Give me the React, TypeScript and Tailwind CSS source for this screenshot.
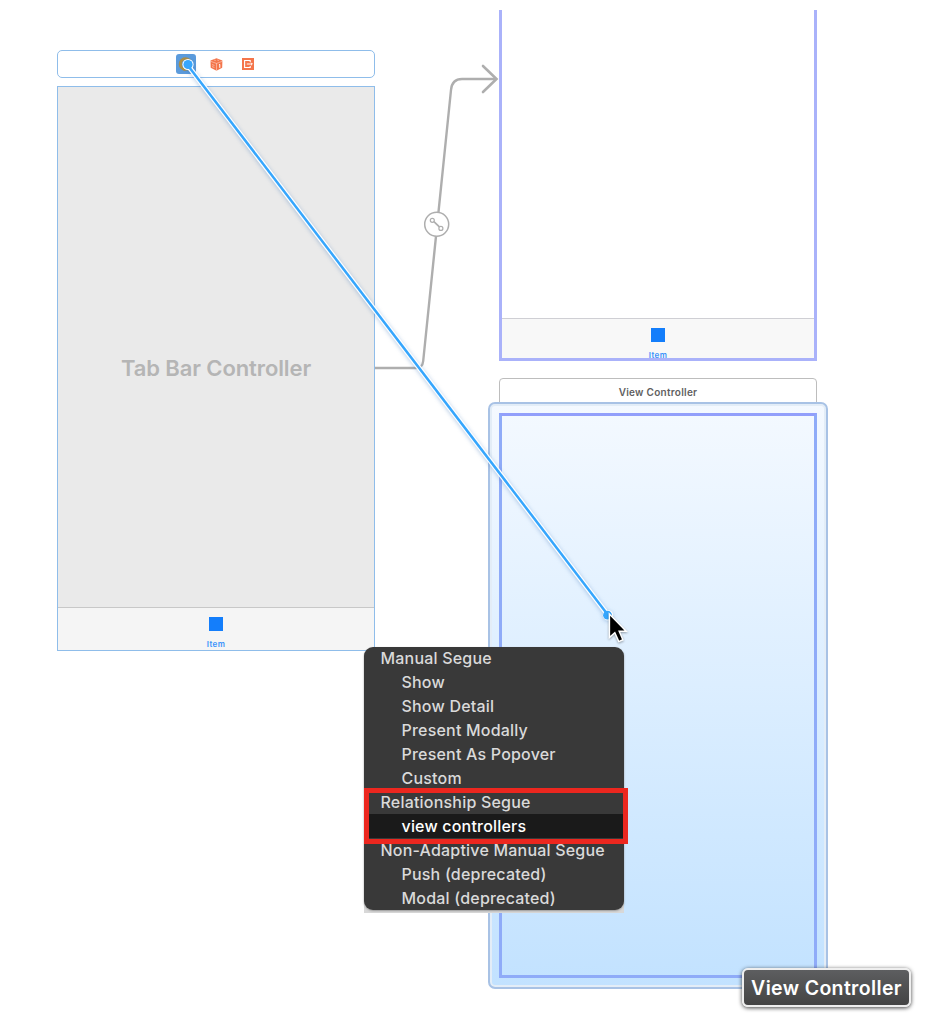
import React from "react";

type Entry = { label: string; kind: "header" | "item"; active?: boolean };

const entries: Entry[] = [
  { label: "Manual Segue", kind: "header" },
  { label: "Show", kind: "item" },
  { label: "Show Detail", kind: "item" },
  { label: "Present Modally", kind: "item" },
  { label: "Present As Popover", kind: "item" },
  { label: "Custom", kind: "item" },
  { label: "Relationship Segue", kind: "header" },
  { label: "view controllers", kind: "item", active: true },
  { label: "Non-Adaptive Manual Segue", kind: "header" },
  { label: "Push (deprecated)", kind: "item" },
  { label: "Modal (deprecated)", kind: "item" },
];

function TabItem() {
  return (
    <div className="flex flex-col items-center">
      <div className="h-[14px] w-[14px] shrink-0 bg-[#147efb]" />
      <span className="mt-[8px] text-[8px] leading-[10px] font-semibold tracking-[0.4px] text-[#3b93fa]">Item</span>
    </div>
  );
}

function SceneIcons() {
  return (
    <div className="flex h-full items-center pl-[117.5px]">
      <div className="flex h-5 w-5 items-center justify-center rounded-[3px] bg-[#5b9bdc]">
        <svg width="20" height="20" viewBox="0 0 20 20">
          <circle cx="9.500" cy="10" r="5.400" fill="none" stroke="#ae8f45" strokeWidth="2.800" />
        </svg>
      </div>
      <svg className="ml-[14.5px]" width="13" height="13" viewBox="0 0 13 13">
        <path d="M6.5 .3 12.4 2.4 12.2 9.8 6.5 12.7 .7 9.8 .5 2.4Z" fill="#f4754b" />
        <path d="M.6 3.300 6.5 5.400 12.4 3.300M6.5 5.400V12.6" fill="none" stroke="#fff" strokeOpacity=".6" strokeWidth=".7" />
        <path d="M4 2 5.800 2.500M7.200 2 9 2.500" fill="none" stroke="#fff" strokeOpacity=".5" strokeWidth=".8" />
        <path d="M2 6.600 4.400 7.400M2 8.600 4.400 9.400" fill="none" stroke="#fff" strokeOpacity=".6" strokeWidth=".8" />
        <path d="M9 6.800 9.800 6.400V9.800" fill="none" stroke="#fff" strokeWidth="1" />
      </svg>
      <svg className="ml-[18.5px]" width="12" height="12" viewBox="0 0 12 12">
        <path d="M0 0H12V12H0Z" fill="#f4754b" />
        <path d="M8.200 4.100V2.500H2.600V9.500H8.200V7.900" fill="none" stroke="#fff" strokeWidth="1.100" />
        <path d="M4.800 6H10.200M8.900 4.600 10.300 6 8.900 7.400" fill="none" stroke="#fff" strokeWidth="1" />
      </svg>
    </div>
  );
}

function SegueMenu() {
  return (
    <div className="absolute top-[647px] left-[364px] h-[266px] w-[260px] bg-[linear-gradient(to_bottom,transparent_250px,#d8d8d8_250px)]">
      <div className="flex h-[263px] flex-col overflow-hidden rounded-[9px] bg-[#393939] shadow-[0_1px_2px_#999]">
        {entries.map((e) => (
          <div
            key={e.label}
            className={
              "h-6 shrink-0 text-[16px] leading-[24px] font-medium whitespace-nowrap first:-mt-[1px] " +
              (e.kind === "header" ? "pl-[16.5px] " : "pl-[37.5px] ") +
              (e.active ? "bg-[#1a1a1a] tracking-[0.19px] text-white" : "tracking-[0.2px] text-[#dadada]")
            }
          >
            {e.label}
          </div>
        ))}
      </div>
      <div className="absolute top-[141px] left-0 h-[56px] w-[264px] border-[5px] border-[#ec271f]" />
    </div>
  );
}

export default function App() {
  return (
    <main className="relative h-[1036px] w-[946px] overflow-hidden bg-white font-['Inter',sans-serif]">
      <div className="absolute top-[50px] left-[57px] h-7 w-[318px] rounded-[5px] border border-[#8fbdea]">
        <SceneIcons />
      </div>
      <div className="absolute top-[86px] left-[57px] flex h-[565px] w-[318px] flex-col border border-[#8fbdea] bg-[#eaeaea]">
        <div className="flex flex-1 items-center justify-center pt-[42px]">
          <span className="text-[22px] font-semibold tracking-[-0.1px] whitespace-nowrap text-[#b5b5b5]">Tab Bar Controller</span>
        </div>
        <div className="flex h-[43px] items-start justify-center border-t border-[#c8c8c8] bg-[#f5f5f5] pt-[9px]">
          <TabItem />
        </div>
      </div>

      <div className="absolute top-[10px] left-[499px] flex h-[351px] w-[318px] flex-col border-x-[3px] border-b-[3px] border-[#aab2fa] bg-white">
        <div className="flex-1" />
        <div className="flex h-[40px] items-start justify-center border-t border-[#cfcfd4] bg-[#f8f8f8] pt-[9px]">
          <TabItem />
        </div>
      </div>

      <div className="absolute top-[378px] left-[499px] flex h-[30px] w-[318px] justify-center rounded-t-[4px] border border-[#bdbdbd] bg-white pt-[5px]">
        <span className="text-[10px] leading-[16px] font-semibold tracking-[0.27px] text-[#5f5f5f]">View Controller</span>
      </div>
      <div className="absolute top-[402px] left-[488px] h-[587px] w-[340px] rounded-[7px] border-2 border-[#a8c2e5] bg-gradient-to-b from-[#f4f9ff] to-[#c2e2ff] p-[9px] shadow-[inset_0_0_0_2px_#e3edf7]">
        <div className="h-full w-full border-[3px] border-[#8fabf8] border-t-[#929ffb]" />
      </div>

      <svg className="absolute inset-0" width="946" height="1036" viewBox="0 0 946 1036" fill="none">
        <path d="M375 368H416Q422.500 368 423.200 361L451 90Q452 79 462 79H496" stroke="#aeaeae" strokeWidth="2.4" />
        <path d="M483 66 496.500 79 483 92" stroke="#aeaeae" strokeWidth="2.6" strokeLinecap="round" />
        <circle cx="436.700" cy="224.200" r="12" fill="#fff" stroke="#aeaeae" strokeWidth="1.5" />
        <path d="M433.900 221.600 439.400 226.800" stroke="#aeaeae" strokeWidth="1.7" />
        <circle cx="432.300" cy="220.300" r="2" stroke="#aeaeae" strokeWidth="1.2" />
        <circle cx="440.900" cy="228.400" r="2" stroke="#aeaeae" strokeWidth="1.2" />
        <g className="drop-shadow-[0_1px_2px_rgba(50,110,180,0.35)]">
          <path d="M187.500 65 608 615" stroke="#fff" strokeWidth="5" />
          <circle cx="188" cy="64.500" r="5.600" fill="#fff" />
          <circle cx="608" cy="615.200" r="5.200" fill="#fff" />
        </g>
        <path d="M187.500 65 608 615" stroke="#36a6fd" strokeWidth="2.5" />
        <circle cx="188" cy="64.500" r="4.600" fill="#36a6fd" />
        <path d="M184.200 58.300A6.600 6.600 0 0 0 184.800 70.300 7 7 0 0 1 184.200 58.300Z" fill="#ae8f45" stroke="#ae8f45" strokeWidth="1.4" />
        <circle cx="607.500" cy="615.200" r="4.400" fill="#36a6fd" />
        <path
          className="drop-shadow-[0_1px_1px_rgba(0,0,0,0.35)]"
          d="M609.400 614V637.500L614.800 632.800 618.800 641.600 622.900 639.800 619.200 631.200H626.200Z"
          fill="#000"
          stroke="#fff"
          strokeWidth="1.5"
        />
      </svg>

      <SegueMenu />

      <div className="absolute top-[968px] left-[742px] flex h-[39px] w-[169px] items-center justify-center rounded-[6px] border-2 border-[#eeeeee] bg-gradient-to-b from-[#5d5e60] to-[#444444] pt-[2px] shadow-[0_1px_4px_rgba(0,0,0,0.75)]">
        <span className="text-[19.5px] font-semibold tracking-[0.35px] whitespace-nowrap text-white">View Controller</span>
      </div>
    </main>
  );
}
